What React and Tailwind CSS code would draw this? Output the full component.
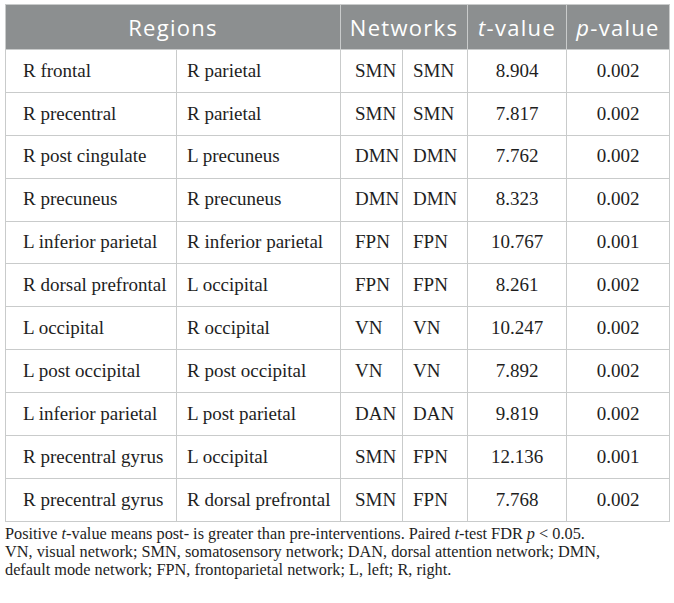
import React from "react";

const rows = [
  ["R frontal", "R parietal", "SMN", "SMN", "8.904", "0.002"],
  ["R precentral", "R parietal", "SMN", "SMN", "7.817", "0.002"],
  ["R post cingulate", "L precuneus", "DMN", "DMN", "7.762", "0.002"],
  ["R precuneus", "R precuneus", "DMN", "DMN", "8.323", "0.002"],
  ["L inferior parietal", "R inferior parietal", "FPN", "FPN", "10.767", "0.001"],
  ["R dorsal prefrontal", "L occipital", "FPN", "FPN", "8.261", "0.002"],
  ["L occipital", "R occipital", "VN", "VN", "10.247", "0.002"],
  ["L post occipital", "R post occipital", "VN", "VN", "7.892", "0.002"],
  ["L inferior parietal", "L post parietal", "DAN", "DAN", "9.819", "0.002"],
  ["R precentral gyrus", "L occipital", "SMN", "FPN", "12.136", "0.001"],
  ["R precentral gyrus", "R dorsal prefrontal", "SMN", "FPN", "7.768", "0.002"],
];

const serif = { fontFamily: '"Liberation Serif", "Times New Roman", serif' };

export default function App() {
  return (
    <div className="w-[674px] h-[603px] bg-white pt-[4px] px-[5px]">
      <table className="w-[664px] border-collapse table-fixed">
        <colgroup>
          <col className="w-[171px]" />
          <col className="w-[164px]" />
          <col className="w-[62px]" />
          <col className="w-[65px]" />
          <col className="w-[99px]" />
          <col className="w-[103px]" />
        </colgroup>
        <thead>
          <tr
            className="h-[45px] bg-[#8c8f90] text-white text-[22px] tracking-[1.3px]"
            style={{ fontFamily: '"Open Sans", "Noto Sans", sans-serif' }}
          >
            <th colSpan={2} className="border border-[#c9cbcb] font-normal text-center">
              Regions
            </th>
            <th colSpan={2} className="border border-[#c9cbcb] font-normal text-center">
              Networks
            </th>
            <th className="border border-[#c9cbcb] font-normal text-center">
              <i>t</i>-value
            </th>
            <th className="border border-[#c9cbcb] font-normal text-center">
              <i>p</i>-value
            </th>
          </tr>
        </thead>
        <tbody className="text-[19px] text-[#1e1e1e]" style={serif}>
          {rows.map((r, i) => (
            <tr key={i} className="h-[42.9px]">
              <td className="border border-[#c9cbcb] pl-[17px] pr-1 whitespace-nowrap">{r[0]}</td>
              <td className="border border-[#c9cbcb] pl-[10px] pr-1 whitespace-nowrap">{r[1]}</td>
              <td className="border border-[#c9cbcb] pl-[14px]">{r[2]}</td>
              <td className="border border-[#c9cbcb] pl-[10px]">{r[3]}</td>
              <td className="border border-[#c9cbcb] text-center">{r[4]}</td>
              <td className="border border-[#c9cbcb] text-center">{r[5]}</td>
            </tr>
          ))}
        </tbody>
      </table>
      <p className="mt-[3px] text-[16.3px] leading-[18.3px] text-[#1e1e1e]" style={serif}>
        Positive <i>t</i>-value means post- is greater than pre-interventions. Paired <i>t</i>-test FDR{" "}
        <i>p</i> &lt; 0.05.
        <br />
        VN, visual network; SMN, somatosensory network; DAN, dorsal attention network; DMN,
        <br />
        default mode network; FPN, frontoparietal network; L, left; R, right.
      </p>
    </div>
  );
}
